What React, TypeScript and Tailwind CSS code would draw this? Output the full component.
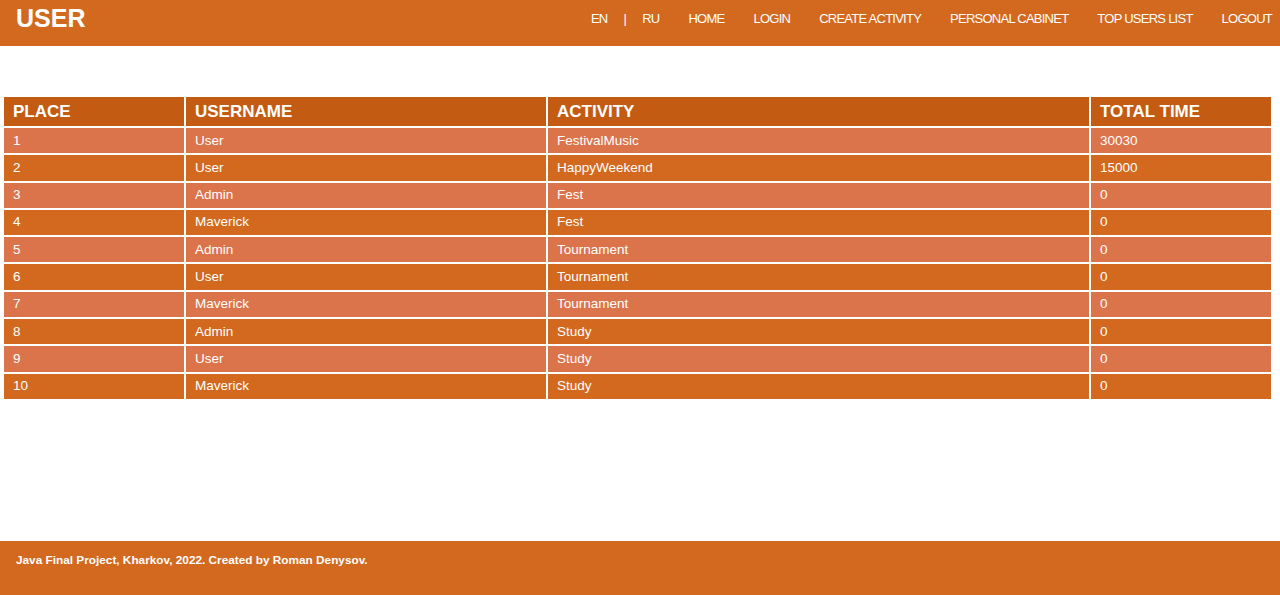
const rows = [
  { place: 1, username: "User", activity: "FestivalMusic", total: 30030 },
  { place: 2, username: "User", activity: "HappyWeekend", total: 15000 },
  { place: 3, username: "Admin", activity: "Fest", total: 0 },
  { place: 4, username: "Maverick", activity: "Fest", total: 0 },
  { place: 5, username: "Admin", activity: "Tournament", total: 0 },
  { place: 6, username: "User", activity: "Tournament", total: 0 },
  { place: 7, username: "Maverick", activity: "Tournament", total: 0 },
  { place: 8, username: "Admin", activity: "Study", total: 0 },
  { place: 9, username: "User", activity: "Study", total: 0 },
  { place: 10, username: "Maverick", activity: "Study", total: 0 },
];

const links = ["HOME", "LOGIN", "CREATE ACTIVITY", "PERSONAL CABINET", "TOP USERS LIST", "LOGOUT"];

export default function App() {
  return (
    <div className="flex min-h-[595px] flex-col bg-white font-['Liberation_Sans',Arial,sans-serif] text-white">
      <header className="flex h-[46px] items-start justify-between bg-[#d2691e] pl-4 pr-2">
        <h1 className="pt-[6px] text-[25px] font-bold leading-[25px]">USER</h1>
        <nav className="flex items-center pt-[11px] text-[13px] leading-[15px] tracking-[-0.75px]">
          <a className="mr-4">EN</a>
          <span className="mr-4">|</span>
          <a className="mr-[29px]">RU</a>
          <div className="flex gap-[29px]">
            {links.map(link => (
              <a key={link}>{link}</a>
            ))}
          </div>
        </nav>
      </header>

      <main className="flex-1 px-[2px] pt-[49px]">
        <table className="w-[1271px] border-separate border-spacing-[2px] text-left">
          <thead>
            <tr className="bg-[#c35b12] text-[17px] font-bold">
              <th className="h-[29px] w-[180px] px-[9px]">PLACE</th>
              <th className="w-[360px] px-[9px]">USERNAME</th>
              <th className="w-[541px] px-[9px]">ACTIVITY</th>
              <th className="w-[180px] px-[9px]">TOTAL TIME</th>
            </tr>
          </thead>
          <tbody className="text-[13.5px]">
            {rows.map((row, index) => (
              <tr key={row.place} className={index % 2 === 0 ? "bg-[#db744b]" : "bg-[#d2691e]"}>
                <td className="h-[25.3px] px-[9px]">{row.place}</td>
                <td className="px-[9px]">{row.username}</td>
                <td className="px-[9px]">{row.activity}</td>
                <td className="px-[9px]">{row.total}</td>
              </tr>
            ))}
          </tbody>
        </table>
      </main>

      <footer className="h-[54px] bg-[#d2691e] px-4 pt-[11px] text-[11.8px] font-bold">
        Java Final Project, Kharkov, 2022. Created by Roman Denysov.
      </footer>
    </div>
  );
}
